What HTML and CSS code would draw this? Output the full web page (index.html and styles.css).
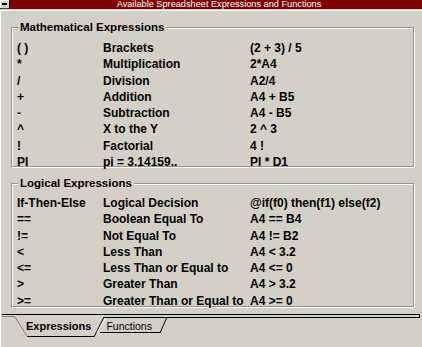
FILE: index.html
```html
<!DOCTYPE html>
<html>
<head>
<meta charset="utf-8">
<title>Available Spreadsheet Expressions and Functions</title>
<link rel="stylesheet" href="styles.css">
</head>
<body>
<div class="window">
  <div class="titlebar">
    <div class="sysmenu"><span class="dash"></span></div>
    <div class="title">Available Spreadsheet Expressions and Functions</div>
  </div>
  <div class="client">
    <fieldset class="group group-math">
      <legend>Mathematical Expressions</legend>
      <div class="rows">
        <span>( )</span><span>Brackets</span><span>(2 + 3) / 5</span>
        <span>*</span><span>Multiplication</span><span>2*A4</span>
        <span>/</span><span>Division</span><span>A2/4</span>
        <span>+</span><span>Addition</span><span>A4 + B5</span>
        <span>-</span><span>Subtraction</span><span>A4 - B5</span>
        <span>^</span><span>X to the Y</span><span>2 ^ 3</span>
        <span>!</span><span>Factorial</span><span>4 !</span>
        <span>PI</span><span>pi = 3.14159..</span><span>PI * D1</span>
      </div>
    </fieldset>
    <fieldset class="group group-logic">
      <legend>Logical Expressions</legend>
      <div class="rows">
        <span>If-Then-Else</span><span>Logical Decision</span><span>@if(f0) then(f1) else(f2)</span>
        <span>==</span><span>Boolean Equal To</span><span>A4 == B4</span>
        <span>!=</span><span>Not Equal To</span><span>A4 != B2</span>
        <span>&lt;</span><span>Less Than</span><span>A4 &lt; 3.2</span>
        <span>&lt;=</span><span>Less Than or Equal to</span><span>A4 &lt;= 0</span>
        <span>&gt;</span><span>Greater Than</span><span>A4 &gt; 3.2</span>
        <span>&gt;=</span><span>Greater Than or Equal to</span><span>A4 &gt;= 0</span>
      </div>
    </fieldset>
    <div class="tabstrip">
      <svg class="tabshape" viewBox="1 314 421 33" width="421" height="33" aria-hidden="true">
        <g fill="none" stroke-width="1">
          <path d="M2 314.5H419.5V318" stroke="#000"/>
          <path d="M104 317.5H419" stroke="#000"/>
          <path d="M2 316.5H15" stroke="#8c8270"/>
          <path d="M15 317L27 336" stroke="#8c8270"/>
          <path d="M27 336.5H94" stroke="#000"/>
          <path d="M94 337L104 317" stroke="#000"/>
          <path d="M97 333L105.5 318" stroke="#fff"/>
          <path d="M100 332.5H160" stroke="#000"/>
          <path d="M160 333L167 317" stroke="#000"/>
        </g>
      </svg>
      <span class="tab tab-active">Expressions</span>
      <span class="tab tab-inactive">Functions</span>
    </div>
  </div>
</div>
</body>
</html>
```
FILE: styles.css
```css
* {
  box-sizing: border-box;
}

html,
body {
  margin: 0;
  padding: 0;
  background: #d4d0c8;
}

body {
  font-family: "Liberation Sans", Arial, sans-serif;
  color: #000;
}

.window {
  width: 422px;
  height: 347px;
  overflow: hidden;
  background: #d4d0c8;
}

.titlebar {
  height: 9px;
  background: #800000;
  display: flex;
}

.sysmenu {
  width: 10px;
  height: 9px;
  background: #d4d0c8;
  border-right: 1px solid #000;
  border-bottom: 1px solid #404040;
  box-shadow: inset 1px 1px 0 #fff;
  display: flex;
  align-items: center;
  justify-content: center;
}

.dash {
  width: 5px;
  height: 2px;
  background: #000;
}

.title {
  flex: 1;
  text-align: center;
  color: #fff;
  font-size: 9.2px;
  line-height: 9px;
  padding-left: 6px;
  white-space: nowrap;
}

.client {
  margin-top: 1px;
  height: 337px;
  border-top: 1px solid #fff;
  border-left: 1px solid #fff;
}

.group {
  margin: 9px 0 0 10px;
  width: 403px;
  min-width: 0;
  padding: 6px 0 0 5px;
  border: 1px solid #9d927b;
  box-shadow: 1px 1px 0 #fff, inset 1px 1px 0 #fff;
}

.group-math {
  height: 147px;
}

.group-logic {
  height: 131px;
  padding-top: 5px;
}

.group legend {
  margin-left: 1px;
  padding: 0 2px;
  font-size: 11.5px;
  font-weight: bold;
  line-height: 14px;
  background: #d4d0c8;
}

.rows {
  display: grid;
  grid-template-columns: 86px 147px auto;
  grid-auto-rows: 16.25px;
  font-size: 12px;
  font-weight: bold;
  line-height: 16.25px;
  white-space: nowrap;
}

.tabstrip {
  position: relative;
  margin-top: 7px;
  width: 421px;
  height: 33px;
  display: flex;
  align-items: flex-start;
  padding: 5px 0 0 25px;
}

.tabshape {
  position: absolute;
  left: 0;
  top: 0;
  display: block;
}

.tab {
  position: relative;
  font-size: 11px;
  line-height: 14px;
  white-space: nowrap;
}

.tab-active {
  font-weight: bold;
}

.tab-inactive {
  font-size: 10.5px;
  margin-left: 15px;
}
```
